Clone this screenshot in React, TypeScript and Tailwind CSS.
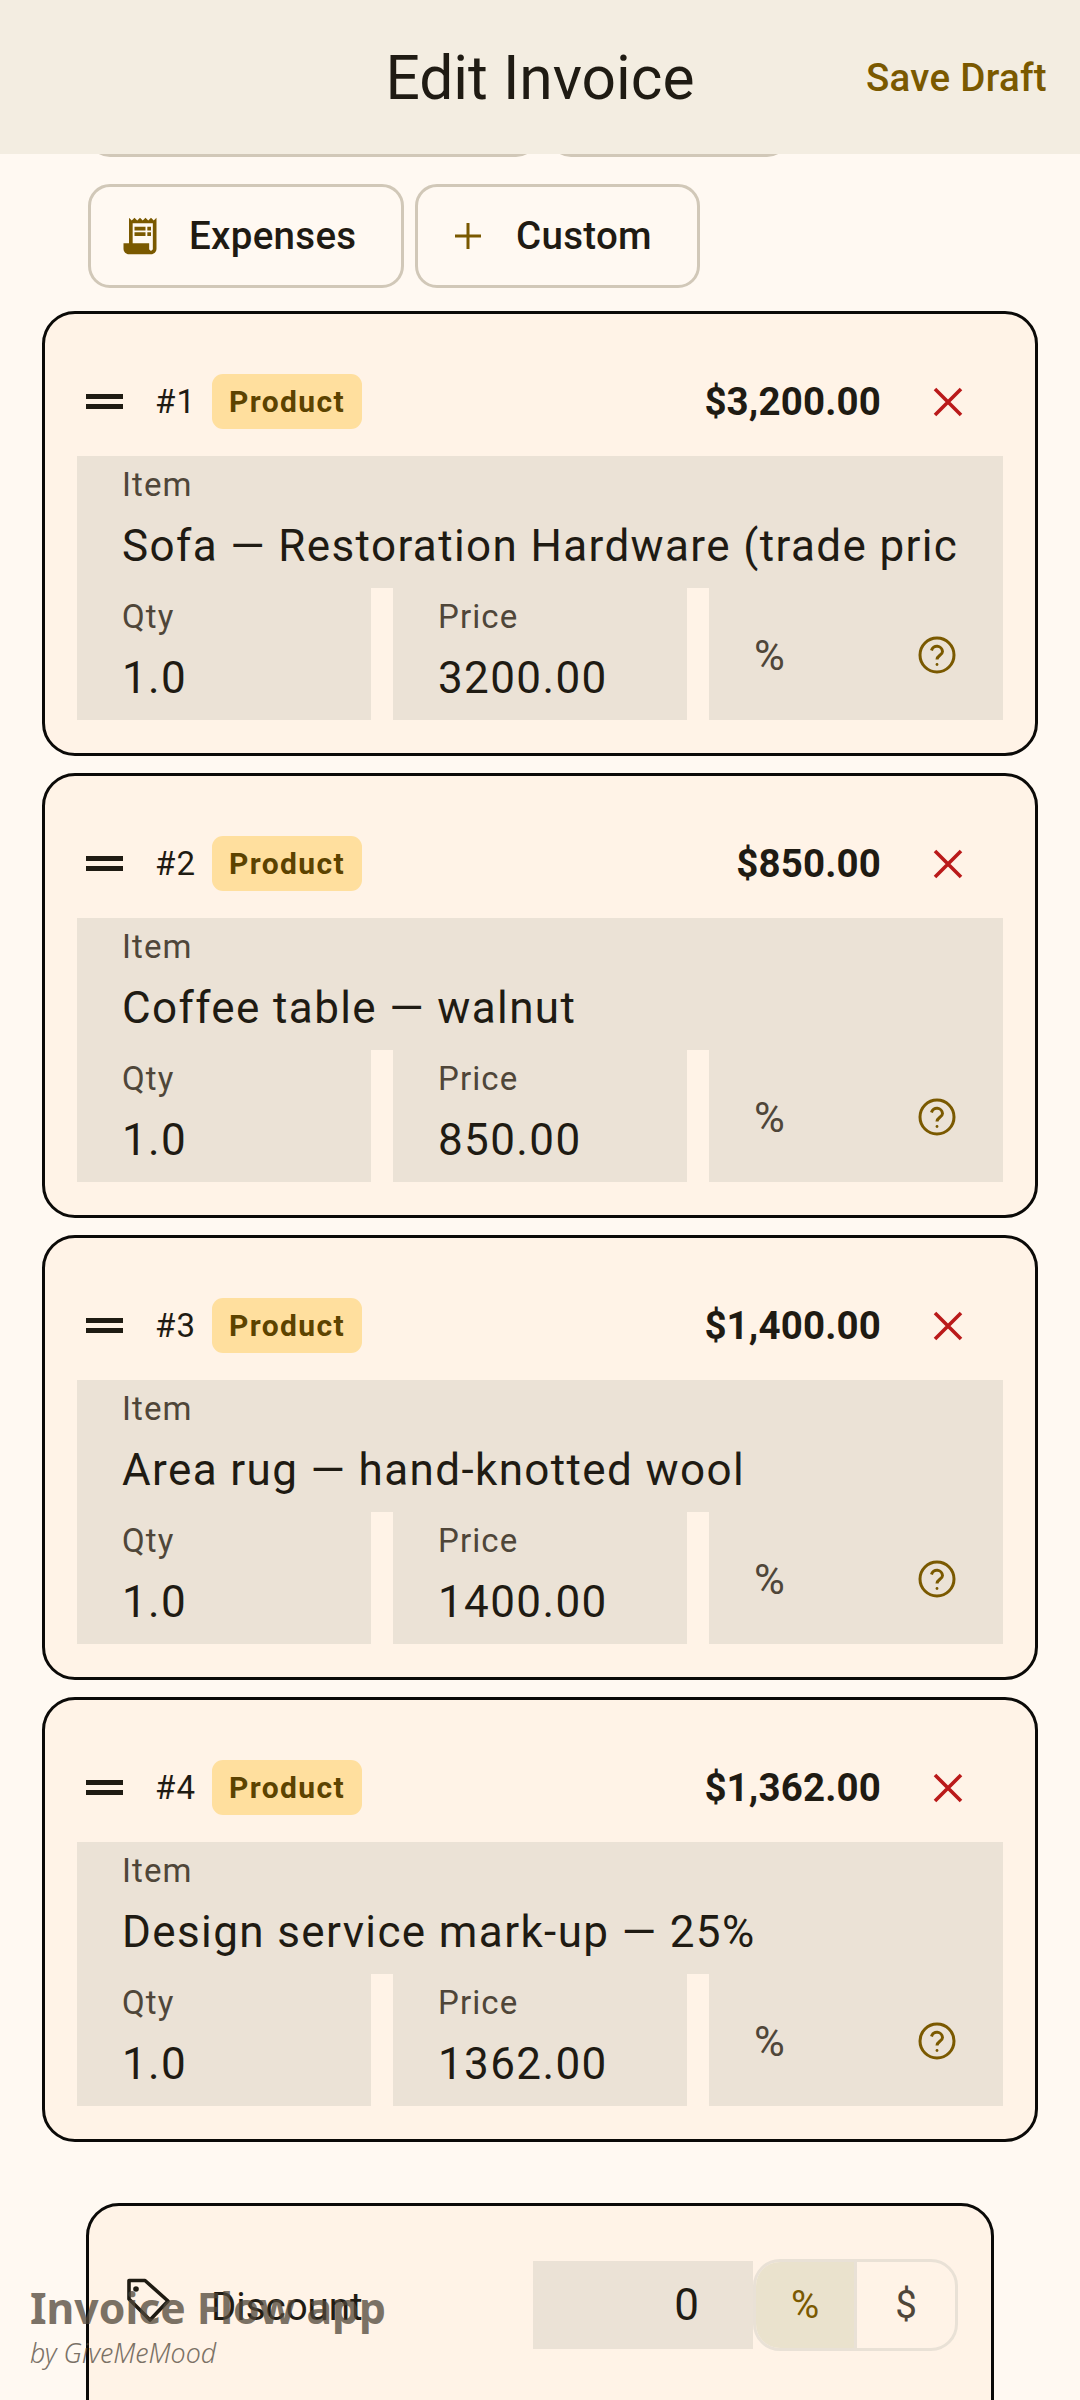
import React from "react";

const items = [
  { n: 1, total: "$3,200.00", name: "Sofa — Restoration Hardware (trade price)", price: "3200.00" },
  { n: 2, total: "$850.00", name: "Coffee table — walnut", price: "850.00" },
  { n: 3, total: "$1,400.00", name: "Area rug — hand-knotted wool", price: "1400.00" },
  { n: 4, total: "$1,362.00", name: "Design service mark-up — 25%", price: "1362.00" },
];

function Field({ label, value }: { label: string; value: string }) {
  return (
    <div className="bg-[#ebe2d6] h-[132px] pl-[45px] pr-[46px] pt-[7px] overflow-hidden">
      <div className="text-[33px] leading-[44px] tracking-[1.1px] text-[#4f4639]">{label}</div>
      <div className="mt-[6px] text-[44px] leading-[66px] tracking-[1.38px] text-[#1f1b13] whitespace-nowrap overflow-hidden">{value}</div>
    </div>
  );
}

function ItemCard({ n, total, name, price }: { n: number; total: string; name: string; price: string }) {
  return (
    <div className="h-[445px] rounded-[33px] border-[3px] border-[#0b0a08] bg-[#fff3e7] px-[32px] pt-[60px]">
      <div className="flex items-center h-[55px] mb-[27px]">
        <div className="ml-[9px] w-[37px] flex flex-col gap-[5px]">
          <div className="h-[5px] bg-[#1f1b13]" />
          <div className="h-[5px] bg-[#1f1b13]" />
        </div>
        <div className="ml-[32px] w-[57px] text-[33px] tracking-[1.1px] text-[#1f1b13]">#{n}</div>
        <div className="w-[150px] h-[55px] rounded-[11px] bg-[#ffdf9e] flex items-center justify-center text-[30px] font-bold tracking-[1.38px] text-[#5c4300]">
          Product
        </div>
        <div className="ml-auto mr-[45px] text-[38.5px] font-bold tracking-[0.15px] text-[#1f1b13]">{total}</div>
        <svg width="44" height="44" viewBox="0 0 44 44" className="mr-[33px]" fill="none" stroke="#ba1a1a" strokeWidth="3.6">
          <path d="M9 9 L35 35 M35 9 L9 35" />
        </svg>
      </div>
      <Field label="Item" value={name} />
      <div className="grid grid-cols-3 gap-x-[22px]">
        <Field label="Qty" value="1.0" />
        <Field label="Price" value={price} />
        <div className="bg-[#ebe2d6] h-[132px] pl-[45px] pr-[44px] pt-[2px] flex items-center justify-between">
          <span className="text-[42px] text-[#4f4639]">%</span>
          <svg width="44" height="44" viewBox="0 0 44 44" fill="none" stroke="#7a5900" strokeWidth="3">
            <circle cx="22" cy="22" r="17" />
            <path d="M16.5 17.5a5.6 5.6 0 0 1 11 1c0 3.6-5.5 4-5.5 8" />
            <circle cx="22" cy="31.5" r="1.4" fill="#7a5900" stroke="none" />
          </svg>
        </div>
      </div>
    </div>
  );
}

export default function App() {
  return (
    <div className="relative w-[1080px] h-[2400px] overflow-hidden bg-[#fff9f2] font-['Roboto',sans-serif]">
      <header className="relative h-[154px] bg-[#f3ede1] flex items-center justify-center">
        <h1 className="pt-[5px] text-[60.5px] font-normal leading-none text-[#1f1b13]">Edit Invoice</h1>
        <div className="absolute right-[33px] top-[56px] text-[38.5px] leading-[44px] font-medium tracking-[0.3px] text-[#7a5900]">Save Draft</div>
      </header>

      <div className="h-[3px] overflow-hidden flex items-end gap-[11px] pl-[88px]">
        <div className="shrink-0 w-[450px] h-[104px] rounded-[22px] border-[3px] border-[#d1c8b8]" />
        <div className="shrink-0 w-[240px] h-[104px] rounded-[22px] border-[3px] border-[#d1c8b8]" />
      </div>

      <div className="mt-[27px] ml-[88px] flex gap-[11px]">
        <div className="w-[316px] h-[104px] rounded-[22px] border-[3px] border-[#d1c8b8] flex items-center pl-[27px]">
          <svg width="44" height="44" viewBox="0 0 24 24" fill="#7a5900" className="shrink-0">
            <path d="M19.5 3.5 18 2l-1.5 1.5L15 2l-1.5 1.5L12 2l-1.5 1.5L9 2 7.5 3.5 6 2v14H3v3c0 1.66 1.34 3 3 3h12c1.66 0 3-1.34 3-3V2l-1.5 1.5zM19 19c0 .55-.45 1-1 1s-1-.45-1-1v-3H8V5h11v14z" />
            <path d="M9 7h6v2H9zm7 0h2v2h-2zm-7 3h6v2H9zm7 0h2v2h-2z" />
          </svg>
          <span className="ml-[27px] text-[38.5px] font-medium tracking-[0.3px] text-[#1f1b13]">Expenses</span>
        </div>
        <div className="w-[285px] h-[104px] rounded-[22px] border-[3px] border-[#d1c8b8] flex items-center pl-[28px]">
          <svg width="44" height="44" viewBox="0 0 44 44" fill="none" stroke="#7a5900" strokeWidth="3" className="shrink-0">
            <path d="M22 9v26M9 22h26" />
          </svg>
          <span className="ml-[26px] text-[38.5px] font-medium tracking-[0.3px] text-[#1f1b13]">Custom</span>
        </div>
      </div>

      <div className="mt-[23px] mx-[42px] flex flex-col gap-[17px]">
        {items.map((it) => (
          <ItemCard key={it.n} {...it} />
        ))}
      </div>

      <div className="mt-[61px] ml-[86px] w-[908px] h-[300px] rounded-[33px] border-[3px] border-[#0b0a08] bg-[#fff3e7] pt-[53px] pl-[37px] pr-[33px]">
        <div className="flex items-center h-[92px]">
          <svg width="48" height="56" viewBox="0 0 48 56" fill="none" stroke="#1f1b13" strokeWidth="3.6" strokeLinejoin="round" className="shrink-0">
            <path d="M3 3.5 H19 L42 24 L24 43 L3 22 Z" />
            <circle cx="10" cy="12" r="2.8" fill="#1f1b13" stroke="none" />
          </svg>
          <span className="ml-[37px] pt-[4px] text-[38.5px] text-[#1f1b13]">Discount</span>
          <div className="ml-auto w-[220px] h-[88px] bg-[#ebe2d6] flex items-center justify-end pr-[54px] text-[44px] text-[#1f1b13]">0</div>
          <div className="w-[205px] h-[92px] rounded-[27px] border-[3px] border-[#e9e1d6] overflow-hidden flex text-[38.5px]">
            <div className="w-[101px] bg-[#eae2cd] border-r-[3px] border-[#e9e1d6] flex items-center justify-center text-[#7a5900]">%</div>
            <div className="flex-1 flex items-center justify-center text-[#4f4639]">$</div>
          </div>
        </div>
      </div>

      <div className="absolute left-[30px] top-[2280px] font-['Noto_Sans',sans-serif] text-[#4f4639] opacity-75">
        <div className="text-[42.7px] leading-[56px] font-bold">Invoice Flow app</div>
        <div className="text-[26.8px] leading-[34px] italic font-light">by GiveMeMood</div>
      </div>
    </div>
  );
}
